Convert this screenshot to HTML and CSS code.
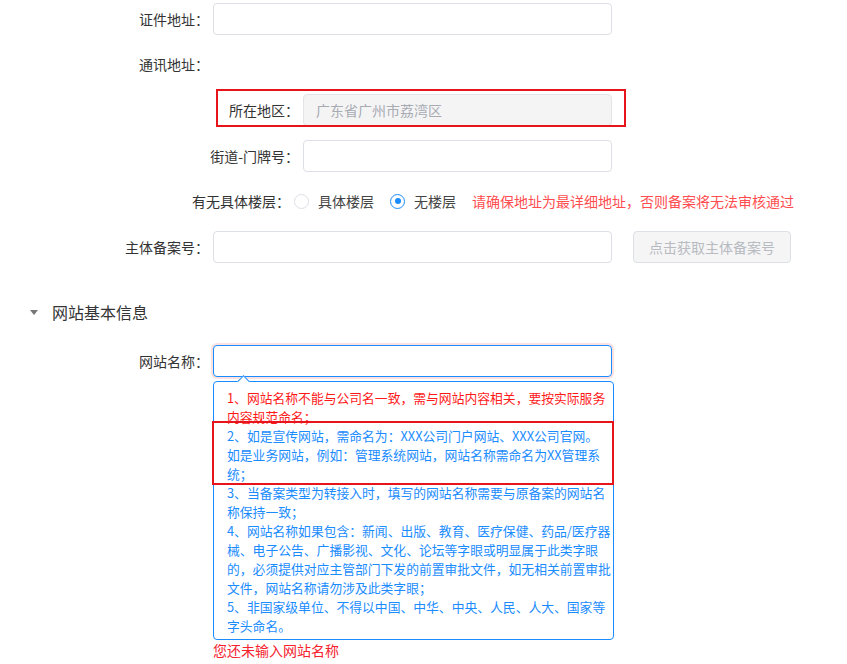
FILE: index.html
```html
<!DOCTYPE html>
<html lang="zh-CN">
<head>
<meta charset="utf-8">
<title>网站备案信息</title>
<link rel="stylesheet" href="styles.css">
</head>
<body>
<div class="form">
  <div class="row">
    <label class="label">证件地址：</label>
    <input class="input" type="text">
  </div>
  <div class="row">
    <label class="label">通讯地址：</label>
  </div>
  <div class="row marked">
    <label class="label sub">所在地区：</label>
    <input class="input short" type="text" disabled value="广东省广州市荔湾区">
  </div>
  <div class="row">
    <label class="label sub">街道-门牌号：</label>
    <input class="input short" type="text">
  </div>
  <div class="row">
    <label class="label radio-label">有无具体楼层：</label>
    <span class="radio"><span class="dot"></span>具体楼层</span>
    <span class="radio"><span class="dot checked"></span>无楼层</span>
    <span class="tip">请确保地址为最详细地址，否则备案将无法审核通过</span>
  </div>
  <div class="row">
    <label class="label">主体备案号：</label>
    <input class="input" type="text">
    <button class="btn" disabled>点击获取主体备案号</button>
  </div>

  <div class="section">
    <span class="caret"></span>
    <span class="section-title">网站基本信息</span>
  </div>

  <div class="row row-top">
    <label class="label">网站名称：</label>
    <div class="field">
      <input class="input focus" type="text">
      <div class="popover">
        <div class="item red">1、网站名称不能与公司名一致，需与网站内容相关，要按实际服务<br>内容规范命名；</div>
        <div class="item marked2">2、如是宣传网站，需命名为：XXX公司门户网站、XXX公司官网。<br>如是业务网站，例如：管理系统网站，网站名称需命名为XX管理系<br>统；</div>
        <div class="item">3、当备案类型为转接入时，填写的网站名称需要与原备案的网站名<br>称保持一致；</div>
        <div class="item">4、网站名称如果包含：新闻、出版、教育、医疗保健、药品/医疗器<br>械、电子公告、广播影视、文化、论坛等字眼或明显属于此类字眼<br>的，必须提供对应主管部门下发的前置审批文件，如无相关前置审批<br>文件，网站名称请勿涉及此类字眼；</div>
        <div class="item">5、非国家级单位、不得以中国、中华、中央、人民、人大、国家等<br>字头命名。</div>
      </div>
      <div class="error">您还未输入网站名称</div>
    </div>
  </div>
</div>
</body>
</html>
```

FILE: styles.css
```css
html, body {
  margin: 0;
  padding: 0;
  background: #fff;
}
body {
  width: 847px;
  height: 664px;
  overflow: hidden;
  font-family: "Noto Sans CJK SC", "Noto Sans", sans-serif;
  font-size: 14px;
  color: #333;
}
.form {
  padding-top: 2.5px;
}
.row {
  display: flex;
  align-items: center;
  height: 32px;
  margin-bottom: 13.7px;
  position: relative;
}
.label {
  flex: 0 0 213px;
  box-sizing: border-box;
  padding-right: 4px;
  text-align: right;
  font-size: 14px;
  color: #333;
  white-space: nowrap;
}
.label.sub {
  flex-basis: 303px;
}
.label.radio-label {
  flex-basis: 294px;
}
.input {
  width: 399px;
  height: 32px;
  box-sizing: border-box;
  border: 1px solid #dcdfe6;
  border-radius: 4px;
  background: #fff;
  padding: 0 12px;
  margin: 0;
  font-family: inherit;
  font-size: 14px;
  color: #333;
  outline: none;
}
.input.short {
  width: 309px;
}
.input:disabled {
  background: #f4f4f5;
  border-color: #e2e4e8;
  color: #a8abb2;
  -webkit-text-fill-color: #a8abb2;
  opacity: 1;
}
.input.focus {
  border-color: #1a8cff;
  box-shadow: 0 0 0 2px rgba(245, 120, 120, 0.22);
}
.marked::after {
  content: "";
  position: absolute;
  left: 216px;
  top: -4.5px;
  width: 410px;
  height: 38px;
  box-sizing: border-box;
  border: 2px solid #e8141c;
  pointer-events: none;
}
.radio {
  display: inline-flex;
  align-items: center;
  gap: 9px;
  margin-right: 16px;
  color: #444;
}
.dot {
  width: 15px;
  height: 15px;
  box-sizing: border-box;
  border: 1px solid #dcdfe6;
  border-radius: 50%;
  background: #fff;
  position: relative;
}
.dot.checked {
  border-color: #1a8cff;
}
.dot.checked::after {
  content: "";
  position: absolute;
  left: 3.5px;
  top: 3.5px;
  width: 6px;
  height: 6px;
  border-radius: 50%;
  background: #1a8cff;
}
.tip {
  color: #ff4d4f;
}
.btn {
  margin-left: 21px;
  width: 158px;
  height: 32px;
  box-sizing: border-box;
  border: 1px solid #dcdfe6;
  border-radius: 4px;
  background: #f5f5f5;
  color: #b8bbc2;
  font-family: inherit;
  font-size: 14px;
  padding: 0;
}
.section {
  display: flex;
  align-items: center;
  height: 24px;
  margin: 37.5px 0 20.5px 30px;
}
.caret {
  width: 0;
  height: 0;
  border-left: 4px solid transparent;
  border-right: 4px solid transparent;
  border-top: 5px solid #777;
  margin-right: 14px;
}
.section-title {
  font-size: 16px;
  color: #333;
}
.row-top {
  height: auto;
  align-items: flex-start;
}
.row-top .label {
  line-height: 32px;
}
.field {
  display: flex;
  flex-direction: column;
}
.popover {
  position: relative;
  margin-top: 4.5px;
  width: 401px;
  box-sizing: border-box;
  border: 1px solid #1a8cff;
  border-radius: 4px;
  background: #fff;
  padding: 6px 10px 4px 13px;
  font-size: 12.8px;
  line-height: 19px;
  color: #1a8cff;
  white-space: nowrap;
}
.popover::before {
  content: "";
  position: absolute;
  left: 25px;
  top: -5px;
  width: 8px;
  height: 8px;
  background: #fff;
  border-top: 1px solid #1a8cff;
  border-left: 1px solid #1a8cff;
  transform: rotate(45deg);
}
.item.red {
  color: #ff1a1a;
}
.marked2 {
  position: relative;
}
.marked2::after {
  content: "";
  position: absolute;
  left: -15px;
  right: -11px;
  top: -5px;
  bottom: -1.5px;
  border: 2px solid #e8141c;
  pointer-events: none;
}
.error {
  font-size: 14px;
  line-height: 20px;
  color: #f5222d;
}
```
